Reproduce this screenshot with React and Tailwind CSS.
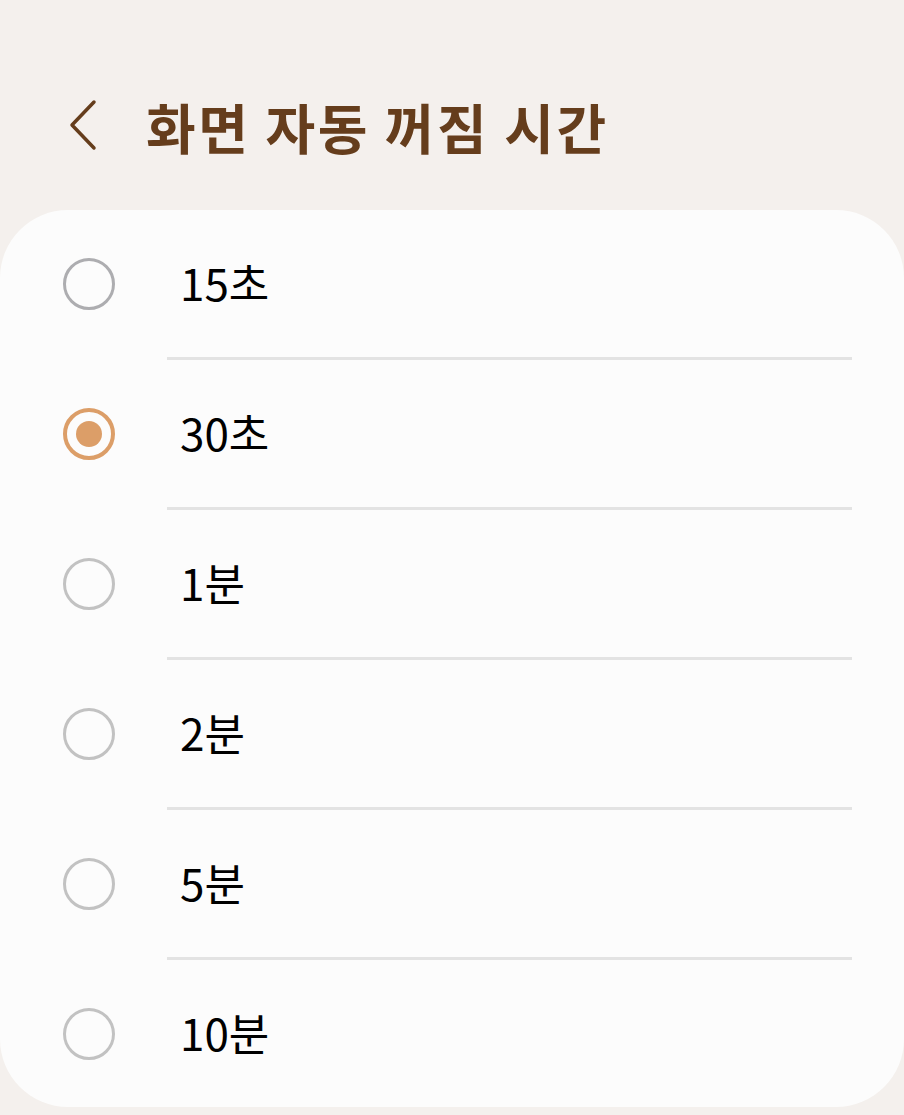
const options = ['15초', '30초', '1분', '2분', '5분', '10분'];

function Radio({ checked, first }) {
  if (checked) {
    return (
      <div className="w-[52px] h-[52px] rounded-full border-[4px] border-[#dc9e68] flex items-center justify-center">
        <div className="w-[26px] h-[26px] rounded-full bg-[#dc9e68]" />
      </div>
    );
  }
  return (
    <div
      className={`w-[52px] h-[52px] rounded-full border-[3.5px] ${first ? 'border-[#adadb0]' : 'border-[#c2c2c2]'}`}
    />
  );
}

export default function App() {
  const selected = '30초';
  return (
    <div
      className="w-[904px] h-[1115px] bg-[#f4f0ed] overflow-hidden"
      style={{ fontFamily: '"Noto Sans CJK KR", "Noto Sans", sans-serif' }}
    >
      <div className="h-[210px] flex items-start pt-[92px] pl-[66px]">
        <svg width="34" height="54" viewBox="0 0 34 54" className="mt-[6px]">
          <path d="M28 4 L6 27 L28 50" fill="none" stroke="#653d1c" strokeWidth="3.5" strokeLinecap="round" strokeLinejoin="round" />
        </svg>
        <h1 className="ml-[46px] text-[54px] leading-[70px] font-bold text-[#653d1c] tracking-[2.6px]">
          화면 자동 꺼짐 시간
        </h1>
      </div>

      <div className="bg-[#fcfcfc] rounded-[68px] h-[897px]">
        {options.map((label, i) => (
          <div key={label}>
            <div className="h-[147px] flex items-center pl-[63px]">
              <Radio checked={label === selected} first={i === 0} />
              <span className="ml-[65px] text-[44px] text-black leading-none pb-[3px]">{label}</span>
            </div>
            {i < options.length - 1 && (
              <div className="ml-[167px] mr-[52px] h-[3px] bg-[#e3e3e3]" />
            )}
          </div>
        ))}
      </div>
    </div>
  );
}
